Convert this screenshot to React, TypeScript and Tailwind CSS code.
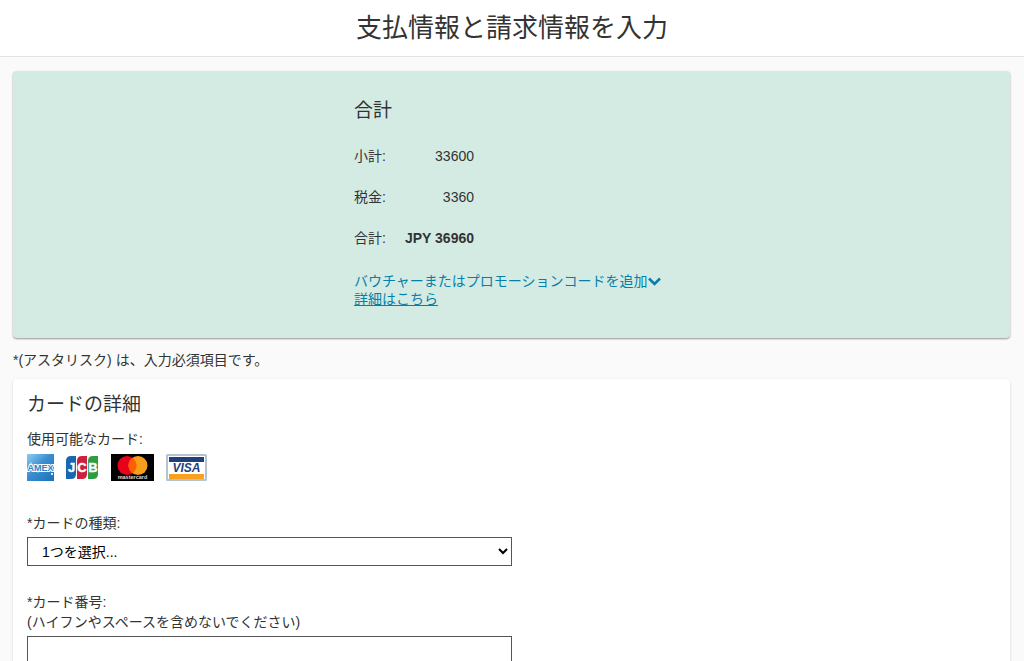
import React, { useState } from 'react';

const totals = [
  { label: '小計:', value: '33600', bold: false },
  { label: '税金:', value: '3360', bold: false },
  { label: '合計:', value: 'JPY 36960', bold: true },
];

const AmexLogo = () => (
  <svg width="27" height="27" viewBox="0 0 27 27" role="img" aria-label="American Express">
    <defs>
      <linearGradient id="amexBg" x1="0" y1="0" x2="1" y2="1">
        <stop offset="0" stopColor="#8ccdf0" />
        <stop offset="0.45" stopColor="#3b8fd0" />
        <stop offset="1" stopColor="#1b6fb8" />
      </linearGradient>
    </defs>
    <rect width="27" height="27" fill="url(#amexBg)" />
    <text x="13.5" y="17" textAnchor="middle" fontSize="9" fontWeight="bold" fill="#2b7fc4" stroke="#fff" strokeWidth="2" paintOrder="stroke" fontFamily="Liberation Sans, sans-serif">
      AMEX
    </text>
    <rect x="24" y="19" width="2" height="2" fill="#d5ebf8" />
  </svg>
);

const JcbLogo = () => (
  <svg width="33" height="27" viewBox="0 0 33 27" role="img" aria-label="JCB">
    <path d="M5 2h5v18q0 5-5 5H0V7q0-5 5-5z" fill="#1768b0" />
    <path d="M16 2h5v18q0 5-5 5h-5V7q0-5 5-5z" fill="#cf1f3f" />
    <path d="M27 2h5v18q0 5-5 5h-5V7q0-5 5-5z" fill="#2f9c3f" />
    <g fill="#fff" stroke="#fff" strokeWidth="0.4" fontSize="13" fontWeight="bold" textAnchor="middle" fontFamily="Liberation Sans, sans-serif">
      <text x="5.5" y="18">J</text>
      <text x="16" y="18">C</text>
      <text x="27" y="18">B</text>
    </g>
  </svg>
);

const MastercardLogo = () => (
  <svg width="43" height="27" viewBox="0 0 43 27" role="img" aria-label="Mastercard">
    <rect width="43" height="27" fill="#000" />
    <circle cx="16" cy="11.5" r="9.5" fill="#eb001b" />
    <circle cx="27" cy="11.5" r="9.5" fill="#f79e1b" />
    <path d="M21.5 3.75a9.5 9.5 0 0 1 0 15.5a9.5 9.5 0 0 1 0-15.5z" fill="#ff5f00" />
    <text x="21.5" y="25" textAnchor="middle" fontSize="5.5" fontWeight="bold" fill="#ddd" fontFamily="Liberation Sans, sans-serif">
      mastercard
    </text>
  </svg>
);

const VisaLogo = () => (
  <svg width="41" height="27" viewBox="0 0 41 27" role="img" aria-label="Visa">
    <rect x="1" y="1" width="39" height="25" rx="0.5" fill="#fff" stroke="#b3c3cf" strokeWidth="2" />
    <rect x="3" y="3" width="35" height="5" fill="#1f3f7d" />
    <rect x="3" y="20" width="35" height="5" fill="#f9a01f" />
    <text x="20.5" y="18" textAnchor="middle" fontSize="12" fontWeight="bold" fontStyle="italic" fill="#1f3f7d" fontFamily="Liberation Sans, sans-serif">
      VISA
    </text>
  </svg>
);

const App: React.FC = () => {
  const [cardType, setCardType] = useState('');
  const [cardNumber, setCardNumber] = useState('');
  const [showVoucher, setShowVoucher] = useState(false);

  return (
    <div className="min-h-screen bg-[#fafafa] font-['Liberation_Sans','Noto_Sans_CJK_JP',sans-serif] text-[14px] leading-5 text-[#333]">
      <header className="border-b border-[#e3e3e3] bg-white py-[10px] text-center">
        <h1 className="text-[26px] leading-9">支払情報と請求情報を入力</h1>
      </header>

      <main className="pt-[14px] pr-[14px] pl-[13px]">
        <section className="rounded bg-[#d4ebe4] px-4 pt-[26px] pb-[30px] shadow-[0_1px_2px_rgba(0,0,0,0.4)]">
          <div className="mx-auto w-[315px]">
            <h2 className="mb-4 text-[19px] leading-7">合計</h2>
            <table className="mb-2">
              <tbody>
                {totals.map((row, i) => (
                  <tr key={i} className="h-[41px]">
                    <th scope="row" className="w-12 pb-3 text-left font-normal">{row.label}</th>
                    <td className={row.bold ? 'w-[72px] pb-3 text-right font-bold whitespace-nowrap' : 'w-[72px] pb-3 text-right'}>
                      {row.value}
                    </td>
                  </tr>
                ))}
              </tbody>
            </table>
            <button
              type="button"
              aria-expanded={showVoucher}
              onClick={() => setShowVoucher(prev => !prev)}
              className="flex items-center leading-[18px] whitespace-nowrap text-[#077fab]"
            >
              バウチャーまたはプロモーションコードを追加
              <svg width="13" height="9" viewBox="0 0 13 9" fill="none" stroke="currentColor" strokeWidth="2.6" aria-hidden="true">
                <path d="M1 1.5l5.500 5.500l5.500-5.500" />
              </svg>
            </button>
            <a href="#details" className="block w-fit leading-[18px] text-[#077fab] underline">詳細はこちら</a>
          </div>
        </section>

        <p className="mt-3 mb-[9px]">*(アスタリスク) は、入力必須項目です。</p>

        <section className="rounded bg-white px-[14px] pt-[10px] pb-8 shadow-[0_1px_3px_rgba(0,0,0,0.15)]">
          <h2 className="pt-[2px] text-[19px] leading-7">カードの詳細</h2>
          <p className="mt-[10px]">使用可能なカード:</p>
          <div className="mt-[5px] flex items-center gap-3">
            <AmexLogo />
            <JcbLogo />
            <MastercardLogo />
            <VisaLogo />
          </div>

          <div className="mt-8">
            <label htmlFor="cardType" className="block">*カードの種類:</label>
            <select
              id="cardType"
              value={cardType}
              onChange={e => setCardType(e.target.value)}
              className="mt-1 block h-[29px] w-1/2 border border-[#555] bg-white pl-[10px] text-black"
            >
              <option value="">1つを選択...</option>
              <option value="amex">American Express</option>
              <option value="jcb">JCB</option>
              <option value="mastercard">Mastercard</option>
              <option value="visa">Visa</option>
            </select>
          </div>

          <div className="mt-[26px]">
            <label htmlFor="cardNumber" className="block">
              *カード番号:
              <br />
              (ハイフンやスペースを含めないでください)
            </label>
            <input
              id="cardNumber"
              type="text"
              value={cardNumber}
              onChange={e => setCardNumber(e.target.value)}
              className="mt-1 block h-[29px] w-1/2 border border-[#555] bg-white px-3 text-black"
            />
          </div>
        </section>
      </main>
    </div>
  );
};

export default App;
